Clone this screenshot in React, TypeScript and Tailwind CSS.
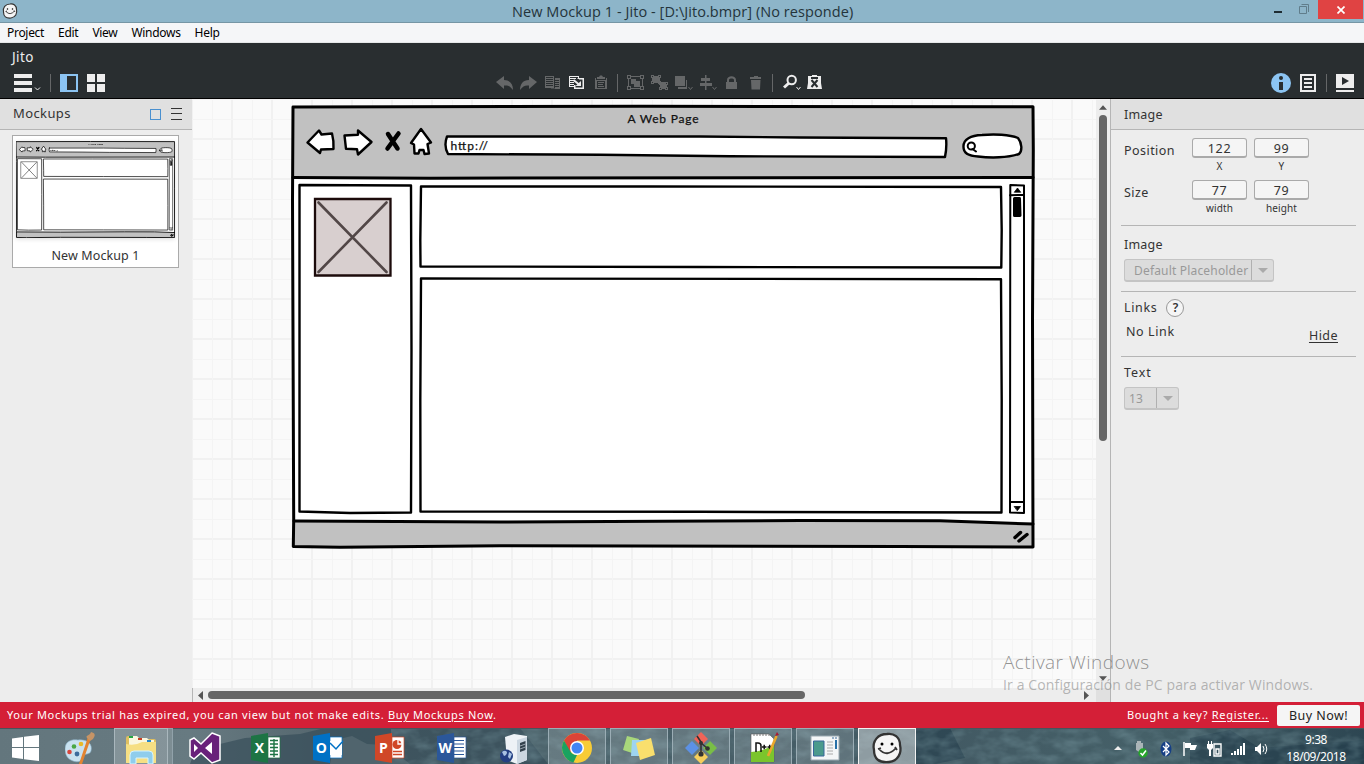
import React from 'react';

type Kids = { children?: React.ReactNode };

const INK = '#000';

function Sketch({ tinted = false, line = 3, className = '' }: { tinted?: boolean; line?: number; className?: string }) {
  return (
    <svg className={className} viewBox="291 104 744 445" preserveAspectRatio="none" fill="none" stroke={INK} strokeWidth={line} strokeLinejoin="round" strokeLinecap="round">
      <path d="M293 106.500H1033V547L900 546.500L400 546L330 547.300L293 546.500Z" fill="#fff" stroke="none" />
      <path d="M293 106.500H1033V178H293Z" fill="#c1c1c1" stroke="none" />
      <path d="M293 521.500L500 522L940 520.500L1033 524V547H293Z" fill="#c1c1c1" stroke="none" />
      <path d="M293 107L640 106.300L1033 106.800L1033.300 150L1032.500 320L1033 547L900 546.500L500 545.800L340 547.300L293.300 546.500L293.700 520L292.500 200Z" />
      <path d="M293 177.500L430 178.200L1033 177.500M294 521L500 522L800 520.500L940 520.800L1033 524" />
      <g strokeWidth={line * 0.8}>
        <path fill="#fff" d="M307.500 142.500L319 130.500L321.500 134.500L332 133.500Q334 141 333.500 149L321 149.500L320 153Z" />
        <path fill="#fff" d="M344.500 135.500L358 134.800V130.500L371.500 142L358 154.500L357 149.300L346 148.800Z" />
        <path fill="#fff" d="M421 129L431 142.500L427.500 144L429 153.500L424.500 154L423.500 150L419.500 150L418.500 153.500L414.500 153.500L414 144.500L411 143Z" />
        <path fill="#fff" d="M447 136.500L700 136.500L800 137.500L946 138.200Q947 147 945 157L730 156.300L600 154.800L448 154Q443.500 146 447 136.500Z" />
        <path fill="#fff" d="M963.500 147C963 139 971 135.500 982 135C994 133.800 1010 134.500 1018 138C1022 143 1022.500 151 1019 154C1008 158 990 158 978 156.500C968 156 963.500 152 963.500 147Z" />
        <path fill="#fff" d="M299.500 185L411 185.500L411.500 350L411 512.500L350 513L299.500 511.500Z" />
        <path fill="#fff" d="M421 186.500H650L1001 187L1001.700 230L1001.300 267.500L700 267L420.500 266.500L420.300 240Z" />
        <path fill="#fff" d="M421 278.500L1001 279.200L1001.700 400L1001.500 512.500L700 511.800L420.500 511.500L420.300 400Z" />
      </g>
      <path fill="#fff" strokeWidth={line * 0.67} d="M1010.300 185L1024 185.500V513L1010 512.500Z" />
      <path d="M388 134L397.500 148.500M398.500 133.500L387.500 148.500" strokeWidth={line * 1.5} />
      <g strokeWidth="2">
        <circle cx="971.300" cy="146" r="3.600" />
        <path d="M972.500 149L976 151.500M1010 195.200L1024 195M1010 502H1024" strokeWidth="2" />
      </g>
      <path d="M1014.500 192L1017.500 188L1020.500 192ZM1014.500 506.500H1020.500L1017.500 510.500Z" fill={INK} strokeWidth=".8" />
      <path d="M1014.500 198.500H1019.500L1020 215.500H1014.500Z" fill={INK} strokeWidth="3" />
      <path d="M1015 537.500L1020.500 532.500M1019 541L1027 534.500" strokeWidth={line * 1.15} />
      <path d="M315 199H390.500V275.500H315Z" fill={tinted ? '#d8cfcf' : '#fff'} stroke={tinted ? '#1c0b0b' : '#222'} strokeWidth="2.300" strokeLinejoin="miter" />
      <path d="M318.500 202.500L386.500 272M386.500 202.500L318.500 272" stroke={tinted ? '#524747' : '#222'} strokeWidth="2.600" />
      <g fill="#111" stroke="none" fontFamily="Lato, 'Open Sans', sans-serif" fontSize="12">
        <text x="627.500" y="122.500" textLength="71" stroke="#111" strokeWidth=".25">A Web Page</text>
        <text x="450.500" y="150" textLength="37.500" stroke="#111" strokeWidth=".25">http://</text>
      </g>
    </svg>
  );
}

function Tool({ on = false, children }: Kids & { on?: boolean }) {
  return (
    <svg className={on ? 'h-[18px] w-[18px] text-[#ededed]' : 'h-[18px] w-[18px] text-[#656768]'} viewBox="0 0 18 18" fill="currentColor">
      {children}
    </svg>
  );
}

const Sep = () => <div className="h-[18px] w-px bg-[#656768]" />;
const caret = <path d="M13.500 13L15.500 15.500L17.500 13" fill="none" stroke="currentColor" />;

function Toolbar() {
  return (
    <header className="flex h-[56px] flex-col border-b border-black bg-[#292e30] text-[#ededed]">
      <div className="h-[31px] pl-3 pt-1 text-[13.5px] leading-[20px] tracking-[0.4px]">Jito</div>
      <div className="flex h-[18px] items-center">
        <div className="flex w-[496px] items-center pl-[14px]">
          <svg className="h-[18px] w-[27px]" viewBox="0 0 27 18" fill="currentColor">
            <path d="M0 0H18V4H0ZM0 7H18V11H0ZM0 14H18V18H0Z" />
            <path d="M21 13.500L23.500 16L26 13.500" fill="none" stroke="currentColor" />
          </svg>
          <div className="ml-[9px] h-[18px] w-px bg-[#656768]" />
          <svg className="ml-[9px] h-[18px] w-[18px]" viewBox="0 0 18 18"><path d="M0 0H18V18H0ZM7 2V16H16V2Z" fill="#8cc4f2" fillRule="evenodd" /></svg>
          <svg className="ml-[9px] h-[18px] w-[18px]" viewBox="0 0 18 18"><path d="M0 0H8V8H0ZM10 0H18V8H10ZM0 10H8V18H0ZM10 10H18V18H10Z" fill="#ededed" /></svg>
        </div>
        <div className="flex gap-[6px]">
          <Tool><path d="M0 8L8 2V6C14 6 17 10 17 16C14 12 12 11 8 11.500V15Z" /></Tool>
          <Tool><path d="M17 8L9 2V6C3 6 0 10 0 16C3 12 5 11 9 11.500V15Z" /></Tool>
          <Tool>
            <path d="M1 2H10V14H1ZM2 3V4H9V3ZM2 5V6H9V5ZM2 7V8H9V7ZM2 9V10H9V9ZM2 11V12H9V11ZM11 4H16V15H7V14.500H11ZM11 6V7H15V6ZM11 8V9H15V8ZM11 10V11H15V10ZM11 12V13H15V12Z" fillRule="evenodd" />
          </Tool>
          <Tool on>
            <path d="M1 2H11V5H9.500V4H10V3H2V4H8V5H2V6H6V7H2V8H6V9H2V10H6V11H2V12H6V13H1Z" fillRule="evenodd" />
            <path d="M11 4H16V15H6V11H7.500V13.500H14.500V5.500H11Z" />
            <path d="M5.500 6L11 10.500" stroke="currentColor" strokeWidth="2" /><path d="M13 7V12H7.500Z" />
          </Tool>
          <Tool>
            <path d="M5 3H7L8 1.500H10L11 3H13V5H5ZM3 4H4V6H14V4H15V15H3ZM5 7V14H13V7Z" fillRule="evenodd" /><path d="M6 8H12V9H6ZM6 10H11V11H6ZM6 12H12V13H6Z" />
          </Tool>
        </div>
        <div className="ml-[7px]"><Sep /></div>
        <div className="ml-[9px] flex gap-[6px]">
          <Tool><path d="M0 1H4V2H13V1H17V5H16V12H17V16H13V15H4V16H0V12H1V5H0ZM1 2V4H3V2ZM14 2V4H16V2ZM4 3V5H2V12H4V14H13V12H15V5H13V3ZM1 13V15H3V13ZM14 13V15H16V13Z" fillRule="evenodd" /><path d="M4 5H9V7H13V13H7V10H4Z" /></Tool>
          <Tool><path d="M0 1H3V2H7V1H10V4H9V7H10V10H7V9H3V10H0V7H1V4H0ZM8 8H17V11H16V13H17V16H14V15H11V16H8V13H9V11H8Z" /><path d="M1 2H2V3H1ZM8 2H9V3H8ZM1 8H2V9H1ZM15 9H16V10H15ZM9 14H10V15H9ZM15 14H16V15H15Z" fill="#292e30" /></Tool>
          <Tool><path d="M0 2H10V12H0ZM11 6H12V15H3V13H11Z" />{caret}</Tool>
          <Tool><path d="M6 1H7.500V4H11V7H7.500V9H13V12H7.500V16H6V12H1V9H6V7H2V4H6Z" />{caret}</Tool>
          <Tool><path d="M3 8H4V6C4 1 13 1 13 6V8H14V15H3ZM6 8H11V6C11 4 6 4 6 6Z" fillRule="evenodd" /></Tool>
          <Tool><path d="M3 3H7V2H11V3H14V5H3ZM4 6H13.500L13 15.500H4.500Z" /></Tool>
        </div>
        <div className="ml-[7px]"><Sep /></div>
        <div className="ml-[10px] flex gap-[6px]">
          <Tool on><circle cx="8.700" cy="6" r="4.200" fill="none" stroke="currentColor" strokeWidth="2" /><path d="M6 9L1 13.500" stroke="currentColor" strokeWidth="3" />{caret}</Tool>
          <Tool on><path d="M1 2H5V1H10V2H14V9L15 15H0L1 9ZM4 3V5H11V3Z" fillRule="evenodd" /><path d="M4.500 6L10.500 13M10.500 6L4.500 13" stroke="#292e30" strokeWidth="2" /></Tool>
        </div>
        <div className="ml-auto flex items-center pr-[10px]">
          <svg className="h-5 w-5" viewBox="0 0 20 20"><circle cx="10" cy="10" r="10" fill="#8cc4f2" /><circle cx="10" cy="5" r="2" fill="#292e30" /><path d="M8 9H12V17H8Z" fill="#292e30" /></svg>
          <svg className="ml-[9px] h-[18px] w-4" viewBox="0 0 16 18"><path d="M0 0H16V18H0ZM2 2V16H14V2ZM4 4H12V6H4ZM4 8H12V10H4ZM4 12H12V14H4Z" fill="#ededed" fillRule="evenodd" /></svg>
          <div className="ml-[10px] h-[18px] w-px bg-[#656768]" />
          <svg className="ml-[9px] h-[18px] w-[18px]" viewBox="0 0 18 18"><path d="M0 0H18V14H0ZM6 3V11L13 7ZM0 16H18V18H0Z" fill="#ededed" fillRule="evenodd" /></svg>
        </div>
      </div>
    </header>
  );
}

function Sidebar() {
  return (
    <aside className="flex w-[192px] flex-col bg-[#ededed] text-[#333]">
      <div className="flex h-[31px] items-center border-b border-[#b5b5b5] bg-[#e0e0e0] pl-[13px] pr-[10px] text-[13px] tracking-[0.4px]">
        <span>Mockups</span>
        <div className="ml-auto h-[11px] w-[11px] border border-[#4a90cf]" />
        <svg className="ml-[10px] h-[12px] w-[11px]" viewBox="0 0 11 12"><path d="M0 .5H11M0 5.500H11M0 11.500H11" stroke="#333" /></svg>
      </div>
      <div className="ml-3 mt-[5px] flex h-[133px] w-[167px] flex-col border border-[#aaa] bg-white pt-[5px]">
        <Sketch line={4} className="ml-[3px] h-[97px] w-[159px] drop-shadow-sm" />
        <div className="mt-[8px] text-center text-[12.5px] leading-[20px] tracking-[0.1px]">New Mockup 1</div>
      </div>
    </aside>
  );
}

function Canvas() {
  return (
    <main className="flex w-[919px] flex-col border-r border-[#b5b5b5] bg-[#ededed]">
      <div className="flex h-[589px]">
        <div className="relative w-[904px] overflow-hidden bg-[#fafafa]">
          <svg className="absolute inset-0 h-full w-full">
            <defs>
              <pattern id="grid" x="39" y="39" width="40" height="40" patternUnits="userSpaceOnUse">
                <path d="M0 0H2V40H0ZM0 0H40V2H0Z" fill="#f1f1f1" />
                <path d="M21 0H22V40H21ZM0 21H40V22H0Z" fill="#f4f4f4" />
              </pattern>
            </defs>
            <rect width="100%" height="100%" fill="url(#grid)" />
          </svg>
          <div className="absolute left-[99px] top-[5px]"><Sketch tinted className="h-[445px] w-[744px]" /></div>
        </div>
        <div className="flex w-[14px] flex-col items-center pt-[6px]">
          <svg className="h-[5px] w-[8px]" viewBox="0 0 9 5"><path d="M0 5L4.500 0L9 5Z" fill="#555" /></svg>
          <div className="mt-[5px] h-[326px] w-[8px] rounded-full bg-[#666]" />
          <svg className="mt-[235px] h-[5px] w-[8px]" viewBox="0 0 9 5"><path d="M0 0H9L4.500 5Z" fill="#555" /></svg>
        </div>
      </div>
      <div className="flex h-[14px]">
        <div className="flex w-[904px] items-center border-l border-[#b5b5b5] pl-[5px]">
          <svg className="h-[9px] w-[5px]" viewBox="0 0 5 9"><path d="M5 0V9L0 4.500Z" fill="#555" /></svg>
          <div className="ml-[5px] h-[8px] w-[597px] rounded-full bg-[#666]" />
          <svg className="ml-[279px] h-[9px] w-[5px]" viewBox="0 0 5 9"><path d="M0 0V9L5 4.500Z" fill="#555" /></svg>
        </div>
        <div className="w-[14px] bg-[#e0e0e0]" />
      </div>
    </main>
  );
}

function Field({ value, label }: { value: string; label: string }) {
  return (
    <div className="flex w-[55px] flex-col items-center">
      <div className="h-5 w-full rounded-[3px] border border-b-2 border-[#aaa] bg-[#f5f5f5] text-center text-[12.5px] leading-[19px] tracking-[0.7px]">{value}</div>
      <div className="text-[10px] leading-[17px] tracking-[0.1px]">{label}</div>
    </div>
  );
}

function Drop({ children, className }: Kids & { className: string }) {
  return (
    <div className={`flex h-[23px] rounded-[3px] border border-b-2 border-[#c4c4c4] bg-[#dcdcdc] text-[12px] leading-[21px] text-[#999] ${className}`}>
      <span className="flex-1 whitespace-nowrap tracking-[0.18px]">{children}</span>
      <div className="flex w-[22px] shrink-0 items-center justify-center border-l border-[#b0b0b0]">
        <svg className="h-[5px] w-[10px]" viewBox="0 0 10 5"><path d="M0 0H10L5 5Z" fill="#aaa" /></svg>
      </div>
    </div>
  );
}

function Inspector() {
  return (
    <aside className="flex w-[253px] flex-col bg-[#ededed] text-[12.5px] leading-[20px] tracking-[0.45px] text-[#333]">
      <div className="h-[31px] border-b border-[#b5b5b5] bg-[#e0e0e0] pl-[13px] leading-[32px] tracking-[0.2px]">Image</div>
      <div className="ml-[10px] mr-2 flex h-[96px] flex-col border-b border-[#b5b5b5] pl-[3px] pt-2">
        <div className="flex h-[42px]"><span className="w-[68px] pt-[3px]">Position</span><div className="flex gap-[7px]"><Field value="122" label="X" /><Field value="99" label="Y" /></div></div>
        <div className="flex h-[42px]"><span className="w-[68px] pt-[3px]">Size</span><div className="flex gap-[7px]"><Field value="77" label="width" /><Field value="79" label="height" /></div></div>
      </div>
      <div className="ml-[10px] mr-2 flex h-[66px] flex-col border-b border-[#b5b5b5] pl-[3px] pt-[9px]">
        <span className="tracking-[0.2px]">Image</span>
        <Drop className="mt-[4px] w-[150px] pl-[9px]">Default Placeholder</Drop>
      </div>
      <div className="ml-[10px] mr-2 flex h-[65px] flex-col border-b border-[#b5b5b5] pl-[3px] pt-[6px]">
        <div className="flex items-center gap-[9px]">
          <span className="tracking-[0.65px]">Links</span>
          <span className="h-[18px] w-[18px] rounded-full border border-[#999] bg-[#f5f5f5] text-center text-[12px] font-semibold leading-[16px] tracking-normal">?</span>
        </div>
        <div className="flex justify-between pl-[2px] pr-[18px] pt-[4px]"><span className="tracking-[0.6px]">No Link</span><span className="mt-[4px] underline underline-offset-2">Hide</span></div>
      </div>
      <div className="flex flex-col pl-[13px] pt-[6px]">
        <span className="tracking-[0.9px]">Text</span>
        <Drop className="mt-[4px] w-[55px] pl-1">13</Drop>
      </div>
    </aside>
  );
}

function Task({ state = 'idle', children }: Kids & { state?: 'idle' | 'open' | 'active' }) {
  const look = {
    idle: 'border-transparent',
    open: 'border-[#9badb5] bg-white/15',
    active: 'border-[#f2f2f2] bg-white/40',
  }[state];
  return (
    <div className={`mx-[2px] flex w-[58px] items-start justify-center border border-b-0 pt-[3px] ${look}`}>
      <svg className="h-8 w-8" viewBox="0 0 32 32">{children}</svg>
    </div>
  );
}

function Office({ color, letter, children }: Kids & { color: string; letter: string }) {
  return (
    <Task>
      <path d="M17 5H29V26H17Z" fill="#fff" stroke={color} strokeWidth=".7" />
      {children}
      <path d="M0 4L17 1V31L0 28Z" fill={color} />
      <text x="8.300" y="20.500" textAnchor="middle" fill="#fff" fontSize="14" fontWeight="700" fontFamily="'Open Sans', sans-serif">{letter}</text>
    </Task>
  );
}

function Wallpaper() {
  return (
    <svg className="absolute inset-0 h-full w-full" viewBox="0 0 1364 36" preserveAspectRatio="none">
      <defs>
        <linearGradient id="sky" x1="0" x2="1" y1="0" y2="0">
          <stop offset="0" stopColor="#63767d" /><stop offset=".14" stopColor="#677a81" /><stop offset=".25" stopColor="#52646c" />
          <stop offset=".4" stopColor="#4c636b" /><stop offset=".68" stopColor="#425963" /><stop offset=".84" stopColor="#456068" /><stop offset="1" stopColor="#2d4652" />
        </linearGradient>
        <filter id="rough"><feTurbulence type="fractalNoise" baseFrequency=".05 .09" numOctaves="3" seed="8" /><feColorMatrix values="0 0 0 0 .18  0 0 0 0 .3  0 0 0 0 .34  1.800 0 0 0 -.65" /></filter>
      </defs>
      <path d="M0 0H1364V36H0Z" fill="url(#sky)" />
      <path d="M195 22L245 10L300 6L325 0H520L548 36H190Z" fill="#344c57" opacity=".65" />
      <path d="M335 12L352 8L367 16L386 17L410 36H330Z" fill="#72848a" opacity=".35" />
      <path d="M916 0H950L965 30L935 36H916ZM1190 10L1230 2L1260 20L1364 12V36H1190Z" fill="#213b49" opacity=".55" />
      <path d="M480 0H1364V36H480Z" filter="url(#rough)" opacity=".5" />
      <path d="M0 .5H1364" stroke="#48545c" />
    </svg>
  );
}

function Taskbar() {
  return (
    <footer className="relative h-[36px] overflow-hidden text-white">
      <Wallpaper />
      <div className="relative flex h-full">
        <div className="w-[50px] pl-[12px] pt-[7px]">
          <svg className="h-[26px] w-[27px]" viewBox="0 0 27 26" fill="#fff"><path d="M0 3.500L11 2V12H0ZM12 1.800L27 0V12H12ZM0 13H11V24L0 22.500ZM12 13H27V26L12 24.200Z" /></svg>
        </div>
        <Task>
          <path d="M0 17C0 9 7 7 13 8C22 7 28 12 26 19C25 23 20 21 18 24C18 29 13 31 8 29C2 27 0 22 0 17Z" fill="#c9e2f0" stroke="#88afc5" strokeWidth=".6" />
          <circle cx="4.500" cy="20" r="2.300" fill="#d9463c" /><circle cx="9" cy="14.500" r="2.300" fill="#4aa845" /><circle cx="16" cy="12" r="2.300" fill="#e9ba29" /><circle cx="12" cy="22" r="2.400" fill="#3b6c9c" />
          <path d="M26 6L17 32L14 32L23 5Z" fill="#e38431" /><path d="M22 6C20 3 25 4 26 0C30 1 31 3 28 7L25 9Z" fill="#c69466" />
        </Task>
        <div className="flex w-[62px]">
          <div className="ml-[2px] flex w-[54px] justify-center border border-b-0 border-[#a9b7bd] bg-white/20 pt-[3px]">
            <svg className="h-8 w-8" viewBox="0 0 32 32">
              <path d="M1 6Q1 4 3 4H10L12 7H29Q31 7 31 9V29H1Z" fill="#dfbf60" /><path d="M4 4H12L14 6H22L24 8H29V14H4Z" fill="#faf7df" />
              <path d="M4 4H8V6H4Z" fill="#25a544" /><path d="M13 6H17V8H13Z" fill="#cb3d21" /><path d="M22 8H26V10H22Z" fill="#2487cc" />
              <path d="M1 12Q10 14 17 10H31V31H1Z" fill="#f6df83" /><path d="M5 32V23Q5 19 9 19H24Q28 19 28 23V32H23V26H11V32Z" fill="#8fcdec" stroke="#d5f4ff" />
            </svg>
          </div>
          <div className="w-[5px] border border-b-0 border-l-0 border-[#91a2aa] bg-white/15" />
        </div>
        <Task>
          <path d="M23 1L31 4V28L23 31L12 21L5 27L1 24V8L5 6L12 12Z" fill="#68217a" stroke="#fff" strokeWidth="1.500" /><path d="M23 10V22L16 16ZM5 12V20L9 16Z" fill="#fff" />
        </Task>
        <Office color="#1d7444" letter="X"><path d="M19 8.500H27M19 12H27M19 15.500H27M19 19H27M19 22.500H27M23 7V25" stroke="#1d7444" strokeWidth="1.400" /></Office>
        <Office color="#0071c5" letter="O"><path d="M17 9H29V23H17Z" fill="#fff" /><path d="M17 11L23 17L30 9" fill="none" stroke="#0071c5" strokeWidth="1.500" /></Office>
        <Office color="#d04727" letter="P"><circle cx="22" cy="12.500" r="4.500" fill="#d04727" /><path d="M23 7V12H28" stroke="#fff" strokeWidth="1.300" fill="none" /><path d="M18 19.500H27M18 22.500H27" stroke="#d04727" strokeWidth="1.500" /></Office>
        <Office color="#2b579a" letter="W"><path d="M17 8.500H27M17 12H27M17 15.500H27M17 19H27M17 22.500H27" stroke="#2b579a" strokeWidth="1.200" /></Office>
        <Task>
          <path d="M6 5L15 2L28 4V28L18 32L8 28Z" fill="#eef2f6" /><path d="M18 8L28 5V28L18 32Z" fill="#ccd7e1" /><path d="M21 11L26.500 9V18L21 20Z" fill="#33414c" /><path d="M21 14L26.500 12M21 17L26.500 15" stroke="#b5c0c9" strokeWidth=".8" />
          <circle cx="7.500" cy="24" r="6.500" fill="#243f82" /><path d="M3 20Q6 17.500 8 20Q8 23 5 24ZM10 20L13 22L11 27L9 25Z" fill="#a9c2e2" />
        </Task>
        <Task state="open">
          <circle cx="16" cy="16" r="15" fill="#f7cc36" /><path d="M16 16L8.500 20.300L3 8.500A15 15 0 0 1 29 8.500H16Z" fill="#db4437" /><path d="M3 8.500L9.500 19.800Q12 23 16 23L12.500 30.500A15 15 0 0 1 3 8.500Z" fill="#1aa260" />
          <circle cx="16" cy="16" r="7" fill="#fff" /><circle cx="16" cy="16" r="5.500" fill="#4285f4" />
        </Task>
        <Task state="open">
          <path d="M4 4L16 7L12 22L0 18Z" fill="#a8d77b" /><path d="M9 8H24V24H8Z" fill="#9ed4ef" /><path d="M13 11L28 6L32 23L17 28Z" fill="#f9df6d" />
        </Task>
        <Task state="open">
          <path d="M16 0L23 7L16 14L9 7Z" fill="#f06458" /><path d="M7 9L14 16L7 23L0 16Z" fill="#5c91e5" /><path d="M25 9L32 16L25 23L18 16Z" fill="#79be46" /><path d="M16 18L23 25L16 32L9 25Z" fill="#f5ce5c" />
          <path d="M12 4L16 10V22M16 11L22 16" stroke="#333" strokeWidth="1.600" fill="none" /><circle cx="16" cy="22" r="2.600" fill="#333" /><circle cx="16" cy="11" r="2" fill="#333" /><circle cx="22.500" cy="16.500" r="2.300" fill="#333" />
        </Task>
        <Task state="open">
          <path d="M4 2H22L27 7V30H4Z" fill="#fff" stroke="#555" strokeWidth=".6" /><path d="M4 20Q16 20 27 12V30H4Z" fill="#7bc52c" /><path d="M6 3H23" stroke="#777" strokeDasharray="2 1" />
          <path d="M9 20V11H11Q14 11 14 14V20M15 15H19.500M17.200 12.800V17.300M20.500 15H25M22.700 12.800V17.300" stroke="#111" strokeWidth="1.500" fill="none" />
          <path d="M29.500 4L21 24" stroke="#e9a72d" strokeWidth="2.600" /><path d="M28 4L30 0L32 3Z" fill="#a91b32" />
        </Task>
        <Task state="open">
          <path d="M2 4H30V28H2Z" fill="#f4f6f7" stroke="#9aa9b1" /><path d="M4.500 9H15V24H4.500Z" fill="#4b9a8c" stroke="#38679b" /><path d="M18 10H24M18 13H24M18 16H24M18 19H24M18 22H24" stroke="#aaa" /><path d="M26 8H28V17H26Z" fill="#2871a8" /><path d="M23 6H25M26 6H28" stroke="#386a99" />
        </Task>
        <Task state="active"><Smile /></Task>
        <div className="ml-auto flex items-center">
          <svg className="mt-[5px] h-[18px] w-[156px]" viewBox="1 0 156 18">
            <path d="M1 10L5 6L9 10Z" fill="#eee" />
            <path d="M24 1H28V3H30V10L28 12H26L23 10V3H24Z" fill="#aab4b7" /><circle cx="30" cy="13" r="4.700" fill="#26a52b" /><path d="M27.500 13L29.500 15L33 10.500" fill="none" stroke="#fff" strokeWidth="1.500" />
            <ellipse cx="53" cy="9" rx="5.500" ry="7.500" fill="#153f86" /><path d="M50 6L56 12L53 15V3L56 6L50 12" fill="none" stroke="#fff" strokeWidth="1.200" />
            <path d="M71 2V16" stroke="#fff" strokeWidth="1.500" /><path d="M72 3H78V5H84L82 10H77V8H72Z" fill="#fff" />
            <path d="M101 4H108V16H101ZM103 9H106V14H103Z" fill="none" stroke="#fff" strokeWidth="1.400" /><path d="M94 4H100V8L98 10V16H96V10L94 8ZM95 1H96V4H95ZM98 1H99V4H98Z" fill="#fff" />
            <path d="M118 13H120V15H118ZM121 11H123V15H121ZM124 9H126V15H124ZM127 6H129V15H127ZM130 3H132V15H130Z" fill="#fff" />
            <path d="M142 7H144L148 3V15L144 11H142Z" fill="#fff" /><path d="M150 6Q152 9 150 12M152 4Q155.500 9 152 14" fill="none" stroke="#fff" />
          </svg>
          <div className="w-[92px] pt-[4px] text-center text-[12px] leading-[17px] tracking-[-0.45px]">9:38<br />18/09/2018</div>
          <div className="w-[2px]" />
        </div>
      </div>
    </footer>
  );
}

function Smile() {
  return (
    <>
      <path d="M16 2C23 1 29 5 29 13C31 21 27 29 18 30C8 31 3 27 3 18C1 9 7 2 16 2Z" fill="#f5f5f5" stroke="#333" strokeWidth="2.300" />
      <circle cx="11" cy="12" r="1.500" /><circle cx="21" cy="12" r="1.500" /><path d="M8 17Q16 26 25 16M7 17L10 16M24 15L26 18" fill="none" stroke="#333" strokeWidth="1.800" />
    </>
  );
}

export default function App() {
  return (
    <div className="relative flex h-[764px] w-[1364px] flex-col overflow-hidden font-['Noto_Sans','Open_Sans',sans-serif]">
      <div className="flex h-[23px] border-b border-[#7696a5] bg-[#8db5c9] text-[#24343b]">
        <svg className="ml-[2px] mt-[3px] h-4 w-4" viewBox="0 0 32 32"><Smile /></svg>
        <div className="ml-[494px] w-[342px] whitespace-nowrap text-[14.5px] leading-[23px] tracking-[0.07px] font-['Open_Sans',sans-serif]">New Mockup 1 - Jito - [D:\Jito.bmpr] (No responde)</div>
        <svg className="ml-auto mr-[9px] mt-[4px] h-[11px] w-[36px]" viewBox="0 0 36 11"><path d="M1 7H9V9H1Z" fill="#1e2c32" /><path d="M26.500 2.500H33.500V9.500H26.500ZM28.500 .5H35.500V8" fill="none" stroke="#607d8b" /></svg>
        <div className="flex h-[19px] w-[45px] items-center justify-center bg-[#e04343]"><svg className="h-2 w-2" viewBox="0 0 8 8"><path d="M.5 .5L7.500 7.500M7.500 .5L.5 7.500" stroke="#fff" strokeWidth="1.700" /></svg></div>
        <div className="w-px" />
      </div>
      <nav className="flex h-[20px] gap-[14px] border-b border-[#e5e7e8] bg-[#f5f6f8] pl-[7px] text-[12px] leading-[20px] tracking-[-0.3px] text-black">
        <span>Project</span><span>Edit</span><span>View</span><span>Windows</span><span>Help</span>
      </nav>
      <Toolbar />
      <div className="flex h-[603px]"><Sidebar /><Canvas /><Inspector /></div>
      <div className="flex h-[26px] items-center bg-[#d41f37] pl-[7px] text-[11px] tracking-[0.68px] text-white">
        <span>Your Mockups trial has expired, you can view but not make edits. <span className="underline underline-offset-2">Buy Mockups Now</span>.</span>
        <span className="ml-auto">Bought a key? <span className="underline underline-offset-2">Register...</span></span>
        <div className="ml-[8px] mr-[4px] h-[21px] w-[83px] rounded-[2px] bg-[#f5f5f5] text-center text-[12.5px] leading-[21px] tracking-[0.45px] text-[#222]">Buy Now!</div>
      </div>
      <Taskbar />
      <div className="pointer-events-none absolute left-[1003px] top-[649px] whitespace-nowrap text-[#888]/60 font-['Open_Sans',sans-serif]">
        <div className="text-[19px] font-light leading-[26px] tracking-[0.45px] text-[#777]/80">Activar Windows</div>
        <div className="text-[14px] leading-[20px] tracking-[0.13px]">Ir a Configuración de PC para activar Windows.</div>
      </div>
    </div>
  );
}
